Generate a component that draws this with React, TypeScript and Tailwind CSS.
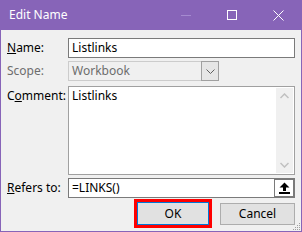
import React from "react";

const font = { fontFamily: '"Noto Sans", "Segoe UI", sans-serif' };

function Label({ children, grey }: { children: React.ReactNode; grey?: boolean }) {
  return (
    <div className={`w-[61px] shrink-0 text-[12px] leading-[16px] ${grey ? "text-[#6d6d6d]" : "text-black"}`}>
      {children}
    </div>
  );
}

export default function App() {
  return (
    <div className="w-[302px] h-[232px] bg-[#8764b8] p-[1px] pt-0 flex flex-col" style={font}>
      {/* title bar */}
      <div className="h-[30px] flex items-center shrink-0 text-white">
        <div className="pl-[8px] text-[12px] leading-[16px] flex-1">Edit Name</div>
        <div className="w-[46px] h-[30px] flex items-center justify-center">
          <div className="w-[10px] h-px bg-[#a58ad0]" />
        </div>
        <div className="w-[46px] h-[30px] flex items-center justify-center">
          <div className="w-[10px] h-[10px] border border-white" />
        </div>
        <div className="w-[46px] h-[30px] flex items-center justify-center">
          <svg width="11" height="11" viewBox="0 0 11 11">
            <path d="M0.5 0.5 L10.5 10.5 M10.5 0.5 L0.5 10.5" stroke="white" strokeWidth="1" />
          </svg>
        </div>
      </div>
      {/* body */}
      <div className="relative flex-1 bg-[#f0f0f0] pl-[6px] pr-[6px] pt-[8px] flex flex-col">
        {/* Name */}
        <div className="flex items-center h-[20px]">
          <Label>
            <u>N</u>ame:
          </Label>
          <div className="flex-1 h-[20px] bg-white border border-[#7a7a7a] pl-[3px] text-[12px] leading-[18px] text-black">
            Listlinks
          </div>
        </div>
        {/* Scope */}
        <div className="flex items-center h-[20px] mt-[3px]">
          <Label grey>Scope:</Label>
          <div className="w-[151px] h-[20px] bg-[#f0f0f0] border border-[#cccccc] flex">
            <div className="flex-1 pl-[3px] text-[12px] leading-[18px] text-[#6d6d6d]">Workbook</div>
            <div className="w-[18px] h-[20px] -mt-px -mr-px border border-[#a0a0a0] bg-[#e6e6e6] flex items-center justify-center">
              <svg width="9" height="5" viewBox="0 0 9 5">
                <path d="M0.5 0.5 L4.5 4.5 L8.5 0.5" stroke="#606060" fill="none" strokeWidth="1" />
              </svg>
            </div>
          </div>
        </div>
        {/* Comment */}
        <div className="flex items-start mt-[5px]">
          <div className="pt-[2px]">
            <Label>
              C<u>o</u>mment:
            </Label>
          </div>
          <div className="flex-1 h-[89px] bg-white border border-[#a0a0a0] flex">
            <div className="flex-1 pl-[3px] pt-[1px] text-[12px] leading-[16px] text-black">Listlinks</div>
            <div className="w-[17px] bg-[#f0f0f0] flex flex-col justify-between items-center py-[5px] mr-px my-px">
              <svg width="9" height="6" viewBox="0 0 9 6">
                <path d="M0.5 5 L4.5 1 L8.5 5" stroke="#c0c0c0" fill="none" strokeWidth="1.5" />
              </svg>
              <svg width="9" height="6" viewBox="0 0 9 6">
                <path d="M0.5 1 L4.5 5 L8.5 1" stroke="#c0c0c0" fill="none" strokeWidth="1.5" />
              </svg>
            </div>
          </div>
        </div>
        {/* Refers to */}
        <div className="flex items-center h-[20px] mt-[3px]">
          <Label>
            <u>R</u>efers to:
          </Label>
          <div className="flex-1 h-[20px] bg-white border border-[#7a7a7a] flex">
            <div className="flex-1 pl-[3px] text-[12px] leading-[18px] text-black">=LINKS()</div>
            <div className="w-[20px] h-[18px] border border-[#7a7a7a] bg-white flex items-center justify-center">
              <svg width="11" height="12" viewBox="0 0 11 12">
                <path d="M5.5 0.5 L10.5 5.5 L7 5.5 L7 9 L4 9 L4 5.5 L0.5 5.5 Z" fill="black" />
                <rect x="0" y="10" width="11" height="2" fill="black" />
              </svg>
            </div>
          </div>
        </div>
        {/* Buttons */}
        <div className="flex items-center justify-end mt-px gap-[8px]">
          <div className="w-[78px] h-[29px] border-[3px] border-[#ff0000] bg-[#0078d7] p-px">
            <div className="w-full h-full bg-[#e1e1e1] flex items-center justify-center text-[12px] text-black">OK</div>
          </div>
          <div className="w-[75px] h-[22px] border border-[#adadad] bg-[#e1e1e1] flex items-center justify-center text-[12px] text-black">
            Cancel
          </div>
        </div>
        {/* resize grip */}
        <svg className="absolute right-0 bottom-0" width="10" height="10" viewBox="0 0 10 10">
          <rect x="8" y="2" width="1" height="1" fill="#a0a0a0" />
          <rect x="6" y="4" width="1" height="1" fill="#a0a0a0" />
          <rect x="8" y="4" width="1" height="1" fill="#a0a0a0" />
          <rect x="4" y="6" width="1" height="1" fill="#a0a0a0" />
          <rect x="6" y="6" width="1" height="1" fill="#a0a0a0" />
          <rect x="8" y="6" width="1" height="1" fill="#a0a0a0" />
          <rect x="2" y="8" width="1" height="1" fill="#a0a0a0" />
          <rect x="4" y="8" width="1" height="1" fill="#a0a0a0" />
          <rect x="6" y="8" width="1" height="1" fill="#a0a0a0" />
          <rect x="8" y="8" width="1" height="1" fill="#a0a0a0" />
        </svg>
      </div>
    </div>
  );
}
